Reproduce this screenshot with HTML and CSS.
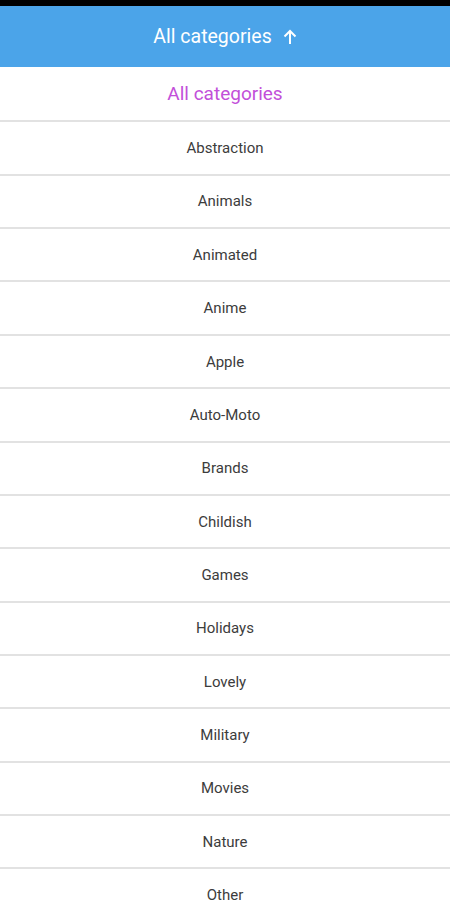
FILE: index.html
```html
<!DOCTYPE html>
<html>
<head>
<meta charset="utf-8">
<link rel="stylesheet" href="styles.css">
</head>
<body>
<div class="status"></div>
<header class="bar">
  <span class="bar-title">All categories</span>
  <svg class="arrow" width="14" height="16" viewBox="0 0 14 16"><path d="M7 15V2M1.5 7.5L7 2l5.5 5.5" fill="none" stroke="#fff" stroke-width="2"/></svg>
</header>
<ul class="list">
  <li class="item item-all">All categories</li>
  <li class="item">Abstraction</li>
  <li class="item">Animals</li>
  <li class="item">Animated</li>
  <li class="item">Anime</li>
  <li class="item">Apple</li>
  <li class="item">Auto-Moto</li>
  <li class="item">Brands</li>
  <li class="item">Childish</li>
  <li class="item">Games</li>
  <li class="item">Holidays</li>
  <li class="item">Lovely</li>
  <li class="item">Military</li>
  <li class="item">Movies</li>
  <li class="item">Nature</li>
  <li class="item">Other</li>
</ul>
</body>
</html>
```
FILE: styles.css
```css
html, body {
  margin: 0;
  padding: 0;
  height: 900px;
  overflow: hidden;
  background: #fff;
  font-family: Roboto, "Noto Sans", sans-serif;
}
.status {
  height: 6px;
  background: #000;
}
.bar {
  height: 61px;
  background: #4ba4e9;
  display: flex;
  align-items: center;
  justify-content: center;
  gap: 11px;
  color: #fff;
}
.bar-title {
  font-size: 19.5px;
}
.arrow {
  display: block;
  margin-top: 1px;
}
.list {
  list-style: none;
  margin: 0;
  padding: 0;
}
.item {
  box-sizing: border-box;
  height: 53.36px;
  border-bottom: 2px solid #e2e2e2;
  display: flex;
  align-items: center;
  justify-content: center;
  font-size: 15px;
  color: #3c3c3c;
}
.item-all {
  height: 55.4px;
  font-size: 19px;
  color: #c24fd9;
}
```
